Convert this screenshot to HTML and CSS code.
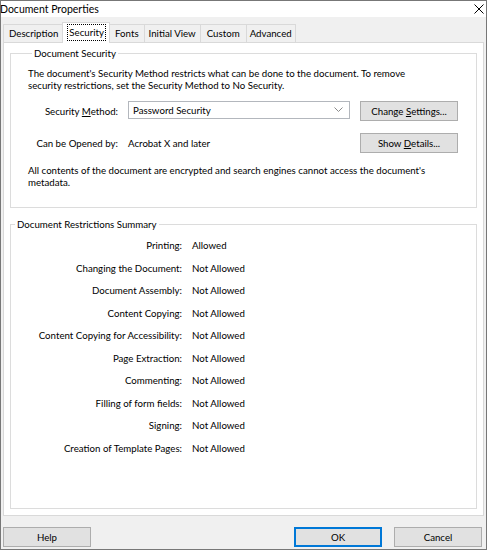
FILE: index.html
```html
<!DOCTYPE html>
<html lang="en">
<head>
  <meta charset="UTF-8" />
  <title>Document Properties</title>
  <link rel="stylesheet" href="styles.css">
</head>
<body>

  <div class="window">
    <div class="titlebar">
      <span class="title">Document Properties</span>
      <svg class="close" width="10" height="10" viewBox="0 0 10 10">
        <path d="M0.5 0.5 L9.5 9.5 M9.5 0.5 L0.5 9.5" stroke="#000" stroke-width="1" fill="none"/>
      </svg>
    </div>

    <div class="tabs">
      <div class="tab first">Description</div>
      <div class="tab active"><span class="focus">Security</span></div>
      <div class="tab">Fonts</div>
      <div class="tab tight">Initial View</div>
      <div class="tab loose">Custom</div>
      <div class="tab tighter">Advanced</div>
    </div>

    <div class="panel">
      <fieldset class="group security">
        <legend>Document Security</legend>
        <p class="note">The document's Security Method restricts what can be done to the document. To remove<br>security restrictions, set the Security Method to No Security.</p>
        <div class="form-row first">
          <span class="label">Security <u>M</u>ethod:</span>
          <div class="select">
            <span>Password Security</span>
            <svg width="9" height="6" viewBox="0 0 9 6">
              <path d="M0.5 0.5 L4.5 4.5 L8.5 0.5" stroke="#8a8a8a" stroke-width="1" fill="none"/>
            </svg>
          </div>
          <button class="btn">Change <u>S</u>ettings...</button>
        </div>
        <div class="form-row second">
          <span class="label">Can be Opened by:</span>
          <span class="value">Acrobat X and later</span>
          <button class="btn">Show <u>D</u>etails...</button>
        </div>
        <p class="note last">All contents of the document are encrypted and search engines cannot access the document's<br>metadata.</p>
      </fieldset>

      <fieldset class="group summary">
        <legend>Document Restrictions Summary</legend>
        <div class="restrictions">
          <span class="key">Printing:</span><span>Allowed</span>
          <span class="key">Changing the Document:</span><span>Not Allowed</span>
          <span class="key">Document Assembly:</span><span>Not Allowed</span>
          <span class="key">Content Copying:</span><span>Not Allowed</span>
          <span class="key">Content Copying for Accessibility:</span><span>Not Allowed</span>
          <span class="key">Page Extraction:</span><span>Not Allowed</span>
          <span class="key">Commenting:</span><span>Not Allowed</span>
          <span class="key">Filling of form fields:</span><span>Not Allowed</span>
          <span class="key">Signing:</span><span>Not Allowed</span>
          <span class="key">Creation of Template Pages:</span><span>Not Allowed</span>
        </div>
      </fieldset>
    </div>

    <div class="footer">
      <button class="btn wide">Help</button>
      <div class="spacer"></div>
      <button class="btn wide ok">OK</button>
      <button class="btn wide">Cancel</button>
    </div>
  </div>

</body>
</html>
```

FILE: styles.css
```css
body {
  margin: 0;
  font-family: "Segoe UI", Lato, sans-serif;
  font-size: 9.7px;
  color: #000;
}
.window {
  width: 487px;
  height: 550px;
  box-sizing: border-box;
  border: 1px solid #777;
  background: #f0f0f0;
  display: flex;
  flex-direction: column;
}
.titlebar {
  height: 16px;
  flex: none;
  background: #fff;
  display: flex;
  align-items: center;
  justify-content: space-between;
  padding-right: 2px;
}
.title { margin-left: -1px; font-size: 10.5px; }
.close { margin-top: -1px; }

/* tab strip */
.tabs {
  height: 25px;
  flex: none;
  display: flex;
  align-items: flex-end;
  padding-left: 2px;
}
.tab {
  height: 18px;
  box-sizing: border-box;
  border: 1px solid #d9d9d9;
  border-bottom: none;
  margin-right: -1px;
  padding: 0 5px;
  line-height: 16px;
  background: #f0f0f0;
}
.tab.first { padding-right: 6px; }
.tab.tight { padding: 0 4px; }
.tab.loose { padding: 0 6px; }
.tab.tighter { padding: 0 3px; }
.tab.active {
  position: relative;
  z-index: 1;
  height: 21px;
  margin: 0 -1px -1px -2px;
  padding: 0 3px 0 4px;
  background: #fff;
  line-height: 19px;
}
.focus {
  border: 1px dotted #000;
  padding: 1px 1px 2px;
}

.panel {
  margin: 0 2px;
  height: 474px;
  flex: none;
  box-sizing: border-box;
  background: #fff;
  border: 1px solid #d9d9d9;
  padding: 4px 6px 6px;
  display: flex;
  flex-direction: column;
}
fieldset {
  margin: 0;
  min-width: 0;
  border: 1px solid #dcdcdc;
}
legend {
  padding: 0 2px;
  margin-left: 4px;
  line-height: 12px;
}
.group.security { padding: 0 17px 19px; }
.note {
  margin: 8px 0 0;
  line-height: 12px;
}
.note.last { margin-top: 11px; }

.form-row {
  display: grid;
  grid-template-columns: 90px 222px 98px;
  column-gap: 10px;
  align-items: center;
  height: 20px;
}
.form-row.first { margin-top: 10px; }
.form-row.second { margin-top: 12px; }
.label { text-align: right; }
.select {
  height: 18px;
  align-self: start;
  box-sizing: border-box;
  border: 1px solid #b3b7bd;
  padding: 0 6px 0 4px;
  display: flex;
  align-items: center;
  justify-content: space-between;
}
.btn {
  font: inherit;
  color: #000;
  height: 20px;
  box-sizing: border-box;
  background: #e1e1e1;
  border: 1px solid #adadad;
  padding: 0;
  margin: 0;
}

.group.summary {
  flex: 1;
  margin-top: 10px;
  padding: 9px 0 0;
}
.restrictions {
  display: grid;
  grid-template-columns: 171px auto;
  column-gap: 10px;
  row-gap: 10.5px;
  line-height: 12px;
}
.key { text-align: right; }

.footer {
  display: flex;
  gap: 12px;
  padding: 11px 4px 0 2px;
}
.spacer { flex: 1; }
.btn.wide { width: 88px; }
.btn.ok {
  border-color: #0078d7;
  box-shadow: inset 0 0 0 1px #0078d7;
}
```
